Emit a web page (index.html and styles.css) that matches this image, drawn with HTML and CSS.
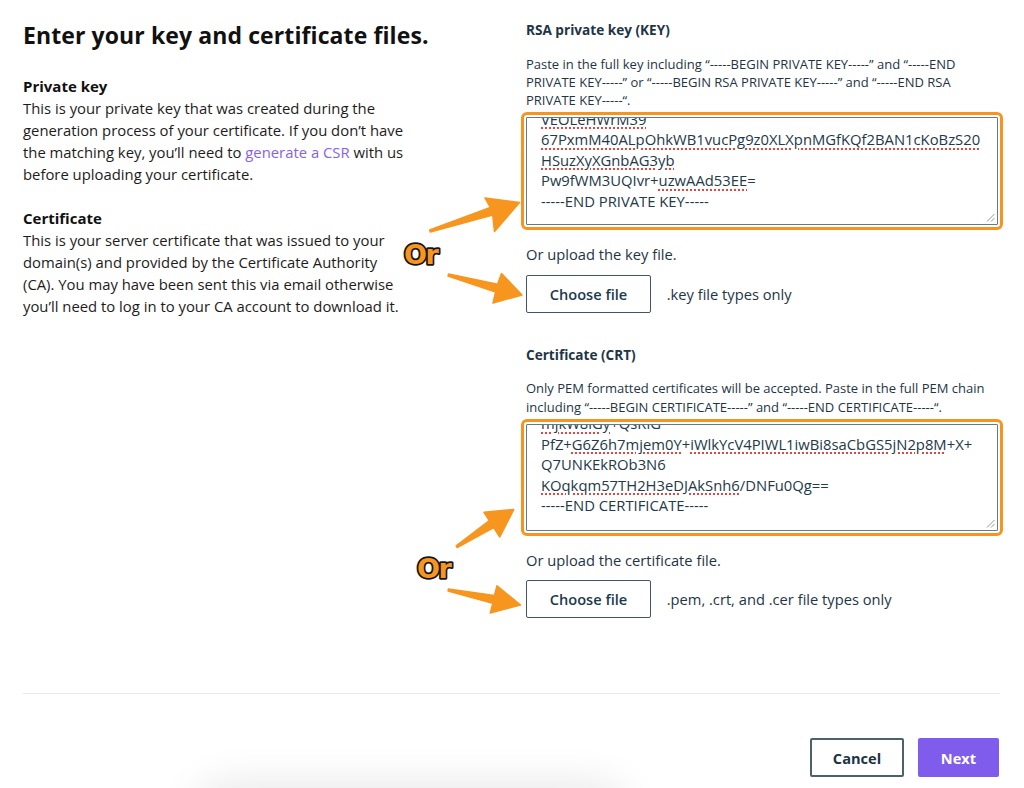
FILE: index.html
```html
<!DOCTYPE html>
<html lang="en">
<head>
<meta charset="utf-8">
<title>Enter your key and certificate files</title>
<link rel="stylesheet" href="styles.css">
</head>
<body>
<div class="page">
  <main class="content">
    <section class="intro">
      <h1 class="title">Enter your key and certificate files.</h1>
      <div class="info">
        <h2 class="info-title">Private key</h2>
        <p class="info-text">This is your private key that was created during the<br>generation process of your certificate. If you don’t have<br>the matching key, you’ll need to <a class="link" href="#">generate a CSR</a> with us<br>before uploading your certificate.</p>
      </div>
      <div class="info">
        <h2 class="info-title">Certificate</h2>
        <p class="info-text">This is your server certificate that was issued to your<br>domain(s) and provided by the Certificate Authority<br>(CA). You may have been sent this via email otherwise<br>you’ll need to log in to your CA account to download it.</p>
      </div>
    </section>

    <section class="fields">
      <div class="field">
        <h3 class="field-label">RSA private key (KEY)</h3>
        <p class="field-help">Paste in the full key including “-----BEGIN PRIVATE KEY-----” and “-----END<br>PRIVATE KEY-----” or “-----BEGIN RSA PRIVATE KEY-----” and “-----END RSA<br>PRIVATE KEY-----“.</p>
        <div class="textarea textarea-key">
          <div class="ta-lines ta-lines-key">
            <div class="ta-line"><span class="sp">VEOLeHWrM39</span></div>
            <div class="ta-line"><span class="sp">67PxmM40ALpOhkWB1vucPg9z0XLXpnMGfKQf2BAN1cKoBzS20</span></div>
            <div class="ta-line"><span class="sp">HSuzXyXGnbAG3yb</span></div>
            <div class="ta-line">Pw9fWM3UQIvr+<span class="sp">uzwAAd53EE</span>=</div>
            <div class="ta-line">-----END PRIVATE KEY-----</div>
          </div>
          <svg class="grip" width="9" height="9" viewBox="0 0 9 9"><path d="M8.5 1 L1 8.5 M8.5 5 L5 8.5" stroke="#8b98a1" stroke-width="1" fill="none"/></svg>
        </div>
        <p class="upload-label">Or upload the key file.</p>
        <div class="upload-row">
          <button class="btn-file" type="button">Choose file</button>
          <span class="file-hint">.key file types only</span>
        </div>
      </div>

      <div class="field field-cert">
        <h3 class="field-label">Certificate (CRT)</h3>
        <p class="field-help">Only PEM formatted certificates will be accepted. Paste in the full PEM chain<br>including “-----BEGIN CERTIFICATE-----” and “-----END CERTIFICATE-----“.</p>
        <div class="textarea textarea-cert">
          <div class="ta-lines ta-lines-cert">
            <div class="ta-line"><span class="sp">mjkW8lGy</span>+QsRiG</div>
            <div class="ta-line">PfZ+<span class="sp">G6Z6h7mjem0Y</span>+<span class="sp">iWlkYcV4PIWL1iwBi8saCbGS5jN2p8M</span>+X+</div>
            <div class="ta-line">Q7UNKEkROb3N6</div>
            <div class="ta-line"><span class="sp">KOqkqm57TH2H3eDJAkSnh6</span>/DNFu0Qg==</div>
            <div class="ta-line">-----END CERTIFICATE-----</div>
          </div>
          <svg class="grip" width="9" height="9" viewBox="0 0 9 9"><path d="M8.5 1 L1 8.5 M8.5 5 L5 8.5" stroke="#8b98a1" stroke-width="1" fill="none"/></svg>
        </div>
        <p class="upload-label">Or upload the certificate file.</p>
        <div class="upload-row">
          <button class="btn-file" type="button">Choose file</button>
          <span class="file-hint">.pem, .crt, and .cer file types only</span>
        </div>
      </div>
    </section>
  </main>

  <div class="divider"></div>

  <footer class="actions">
    <button class="btn btn-cancel" type="button">Cancel</button>
    <button class="btn btn-next" type="button">Next</button>
  </footer>

  <svg class="annot" width="1024" height="788" viewBox="0 0 1024 788">
    <g class="arrows">
      <polygon points="429.7,230 490.3,207.4 485,198 519.5,202.5 494.5,231.5 492.7,215 430.3,232"/>
      <polygon points="448.6,274 497.6,284.3 501.5,273.5 522,295 493,303 495.6,292.1 448,276"/>
      <polygon points="456.2,545.9 489.3,520.7 484,512.3 513.8,509.5 499.8,537 493.7,527.5 457.2,547.5"/>
      <polygon points="448.5,589 494.4,595.6 497,585.8 520.5,605 490.3,613 492.8,603.4 448.1,591"/>
    </g>
    <text class="or-label" x="404" y="264">Or</text>
    <text class="or-label" x="417" y="578">Or</text>
  </svg>

  <div class="blob"></div>
</div>
</body>
</html>
```

FILE: styles.css
```css
html, body {
  margin: 0;
  padding: 0;
  background: #ffffff;
}

.page {
  position: relative;
  width: 1024px;
  height: 788px;
  overflow: hidden;
  display: flex;
  flex-direction: column;
  font-family: "Open Sans", "Liberation Sans", sans-serif;
  background: #ffffff;
}

.content {
  flex: 1;
  display: grid;
  grid-template-columns: 503px 472px;
  align-items: start;
  padding: 20px 0 0 23px;
}

/* Left column */
.intro {
  padding-top: 1.1px;
  color: #1c1c1c;
}

.title {
  margin: 0 0 25.8px;
  font-size: 23px;
  line-height: 28px;
  font-weight: 700;
  letter-spacing: 0.1px;
  color: #111111;
  white-space: nowrap;
}

.info + .info {
  margin-top: 22px;
}

.info-title {
  margin: 0;
  font-size: 15px;
  line-height: 22px;
  font-weight: 700;
  color: #111111;
}

.info-text {
  margin: 0;
  font-size: 14.85px;
  line-height: 22px;
  white-space: nowrap;
}

.link {
  color: #8462f0;
  text-decoration: none;
}

/* Right column */
.fields {
  color: #1e3547;
}

.field-cert {
  margin-top: 32.3px;
}

.field-label {
  margin: 0;
  font-size: 13.6px;
  line-height: 20px;
  font-weight: 700;
}

.field-help {
  margin: 14.5px 0 0;
  font-size: 13px;
  line-height: 18.3px;
  white-space: nowrap;
}

.textarea {
  position: relative;
  box-sizing: border-box;
  margin-top: 7.6px;
  width: 472px;
  border: 1px solid #66798a;
  border-radius: 1px;
  outline: 3.5px solid #f7941d;
  outline-offset: 2px;
  overflow: hidden;
  padding: 0 14px;
  font-size: 14.8px;
  line-height: 20.5px;
  color: #22394a;
}

.textarea-key {
  height: 108px;
}

.textarea-cert {
  height: 107px;
}

.ta-lines-key {
  margin-top: -9px;
}

.ta-lines-cert {
  margin-top: -11.5px;
}

.ta-line {
  white-space: pre;
}

.sp {
  text-decoration: underline dotted #e2463f;
  text-decoration-thickness: 1.5px;
  text-underline-offset: 3px;
}

.grip {
  position: absolute;
  right: 2px;
  bottom: 2px;
}

.upload-label {
  margin: 19px 0 0;
  font-size: 14.7px;
  line-height: 20px;
}

.upload-row {
  display: flex;
  align-items: center;
  margin-top: 10.7px;
}

.btn-file {
  box-sizing: border-box;
  width: 125px;
  height: 38px;
  border: 1.5px solid #3e5666;
  border-radius: 2px;
  background: #ffffff;
  font-family: "Open Sans", "Liberation Sans", sans-serif;
  font-size: 14.6px;
  font-weight: 600;
  color: #1b3a4c;
  padding: 0;
}

.file-hint {
  margin-left: 15.7px;
  font-size: 14.7px;
  line-height: 20px;
}

/* Footer */
.divider {
  height: 1px;
  margin: 0 24px 0 23px;
  background: #e3e9ee;
}

.actions {
  display: flex;
  justify-content: flex-end;
  gap: 14px;
  padding: 44px 25px 10.7px;
}

.btn {
  box-sizing: border-box;
  height: 39px;
  border-radius: 2px;
  font-family: "Open Sans", "Liberation Sans", sans-serif;
  font-size: 14.6px;
  font-weight: 700;
  padding: 0;
}

.btn-cancel {
  width: 94px;
  border: 2px solid #4d616d;
  background: #ffffff;
  color: #1b3445;
}

.btn-next {
  width: 81px;
  border: none;
  background: #7f5cec;
  color: #ffffff;
}

/* Annotation overlay */
.annot {
  position: absolute;
  left: 0;
  top: 0;
  pointer-events: none;
}

.arrows polygon {
  fill: #f7961f;
  stroke: #f7961f;
  stroke-width: 1.5;
  stroke-linejoin: round;
}

.or-label {
  font-family: "DejaVu Sans", sans-serif;
  font-weight: 700;
  font-size: 27px;
  letter-spacing: -1.5px;
  fill: #f7961f;
  stroke: #151515;
  stroke-width: 3.5px;
  stroke-linejoin: round;
  paint-order: stroke;
}

/* Soft shadow at the bottom edge */
.blob {
  position: absolute;
  left: 210px;
  top: 806px;
  width: 400px;
  height: 40px;
  border-radius: 30px;
  box-shadow: 0 -4px 40px 20px rgba(0, 0, 0, 0.09);
}
```
